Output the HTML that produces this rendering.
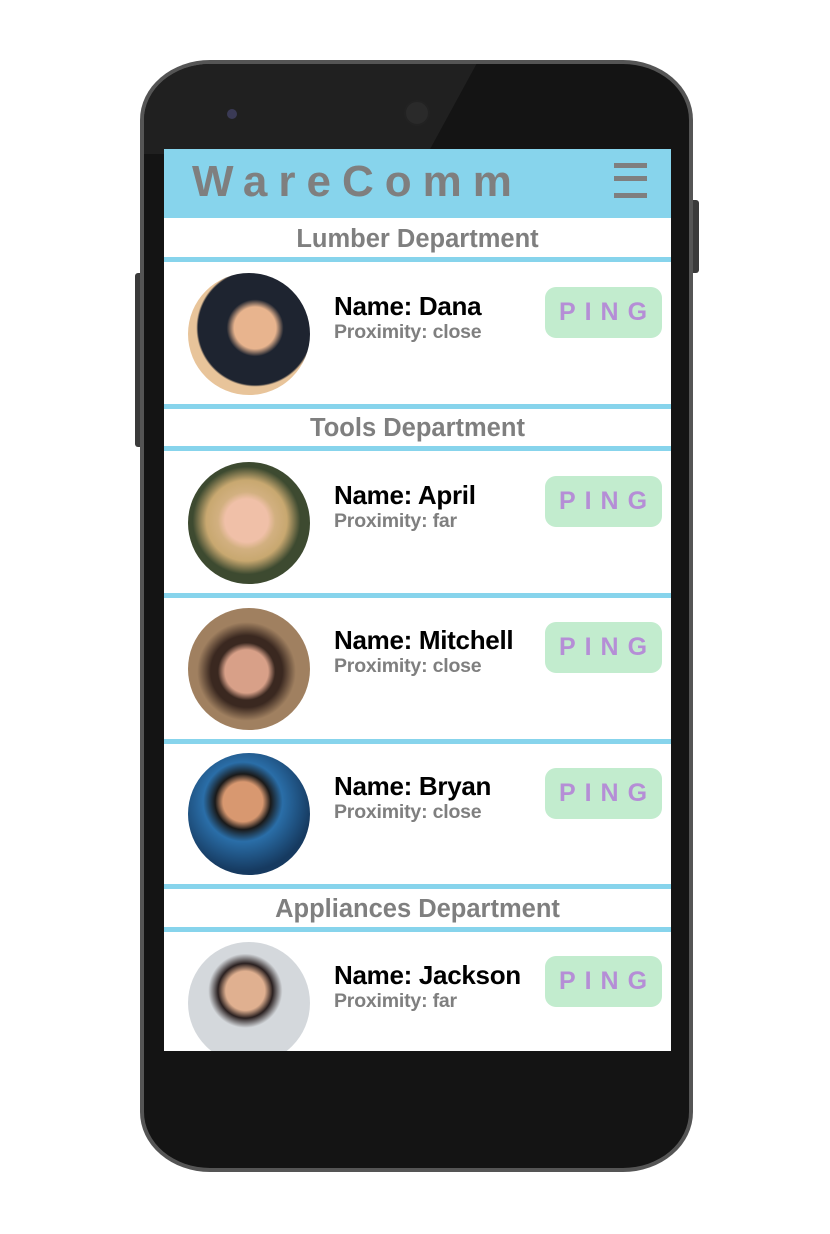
<!DOCTYPE html>
<html><head><meta charset="utf-8"><style>
*{margin:0;padding:0;box-sizing:border-box}
body{width:830px;height:1234px;background:#fff;position:relative;overflow:hidden;font-family:"Liberation Sans",Arial,sans-serif}
.abs{position:absolute}
.phone{left:140px;top:60px;width:553px;height:1112px;border-radius:70px/60px;background:#555;}
.phone2{left:144px;top:64px;width:545px;height:1104px;border-radius:66px/56px;background:#141414;overflow:hidden}
.screen{left:164px;top:149px;width:507px;height:902px;background:#fff;overflow:hidden}
.hdr{left:0;top:0;width:507px;height:69px;background:#87d4ec}
.title{left:28px;top:8px;font-size:44px;font-weight:bold;color:#7f7f7f;letter-spacing:11px}
.bar{left:450px;width:33px;height:5px;background:#7f7f7f}
.sec{left:0;width:507px;text-align:center;font-size:25.5px;font-weight:bold;color:#7f7f7f}
.line{left:0;width:507px;height:5px;background:#87d4ec}
.av{left:24px;width:122px;height:122px;border-radius:50%;overflow:hidden}
.nm{left:170px;font-size:26px;font-weight:bold;color:#000;letter-spacing:-0.3px}
.px{left:170px;font-size:19.5px;font-weight:bold;color:#7f7f7f;letter-spacing:-0.2px}
.btn{left:381px;width:117px;height:51px;border-radius:11px;background:#c2ecce;color:#b58ed6;font-size:25px;font-weight:bold;letter-spacing:9px;text-align:center;line-height:51px;padding-left:8px}
</style></head><body>
<div class="abs" style="left:135px;top:273px;width:8px;height:174px;background:#3a3a3a;border-radius:3px"></div>
<div class="abs" style="left:690px;top:200px;width:9px;height:73px;background:#3a3a3a;border-radius:3px"></div>
<div class="abs phone"></div>
<div class="abs phone2"><div class="abs" style="left:0;top:0;width:545px;height:90px;background:#202020;clip-path:polygon(0 0,61% 0,52% 100%,0 100%)"></div></div>
<div class="abs" style="left:227px;top:109px;width:10px;height:10px;border-radius:50%;background:#3a3a55"></div>
<div class="abs" style="left:404px;top:100px;width:26px;height:26px;border-radius:50%;background:#2a2a2a;border:2px solid #222"></div>
<div class="abs screen">
<div class="abs hdr"></div>
<div class="abs title">WareComm</div>
<div class="abs bar" style="top:14px"></div>
<div class="abs bar" style="top:27px"></div>
<div class="abs bar" style="top:44px"></div>

<div class="abs sec" style="top:76px">Lumber Department</div>
<div class="abs line" style="top:108px"></div>
<div class="abs av" style="top:124px;background:radial-gradient(circle at 55% 45%,#e8b48e 0 22%,#1e2430 30%,#1e2430 60%,#e8c49a 62%)"></div>
<div class="abs nm" style="top:142px">Name: Dana</div>
<div class="abs px" style="top:172px">Proximity: close</div>
<div class="abs btn" style="top:138px">PING</div>
<div class="abs line" style="top:255px"></div>

<div class="abs sec" style="top:265px">Tools Department</div>
<div class="abs line" style="top:297px"></div>
<div class="abs av" style="top:313px;background:radial-gradient(circle at 48% 48%,#f0c0a8 0 24%,#d2b080 32%,#c8a870 45%,#3d4a30 60%)"></div>
<div class="abs nm" style="top:331px">Name: April</div>
<div class="abs px" style="top:361px">Proximity: far</div>
<div class="abs btn" style="top:327px">PING</div>
<div class="abs line" style="top:444px"></div>

<div class="abs av" style="top:459px;background:radial-gradient(circle at 48% 52%,#d8a088 0 24%,#3a2820 32%,#3a2820 40%,#a08060 55%)"></div>
<div class="abs nm" style="top:476px">Name: Mitchell</div>
<div class="abs px" style="top:506px">Proximity: close</div>
<div class="abs btn" style="top:473px">PING</div>
<div class="abs line" style="top:590px"></div>

<div class="abs av" style="top:604px;background:radial-gradient(circle at 45% 40%,#d89870 0 20%,#1a1a1a 28%,#2a6ea8 40%,#163a60 70%)"></div>
<div class="abs nm" style="top:622px">Name: Bryan</div>
<div class="abs px" style="top:652px">Proximity: close</div>
<div class="abs btn" style="top:619px">PING</div>
<div class="abs line" style="top:735px"></div>

<div class="abs sec" style="top:746px">Appliances Department</div>
<div class="abs line" style="top:778px"></div>
<div class="abs av" style="top:793px;background:radial-gradient(circle at 47% 40%,#e0b090 0 20%,#2a2020 28%,#d4d8dc 38%)"></div>
<div class="abs nm" style="top:811px">Name: Jackson</div>
<div class="abs px" style="top:841px">Proximity: far</div>
<div class="abs btn" style="top:807px">PING</div>
</div>
</body></html>
